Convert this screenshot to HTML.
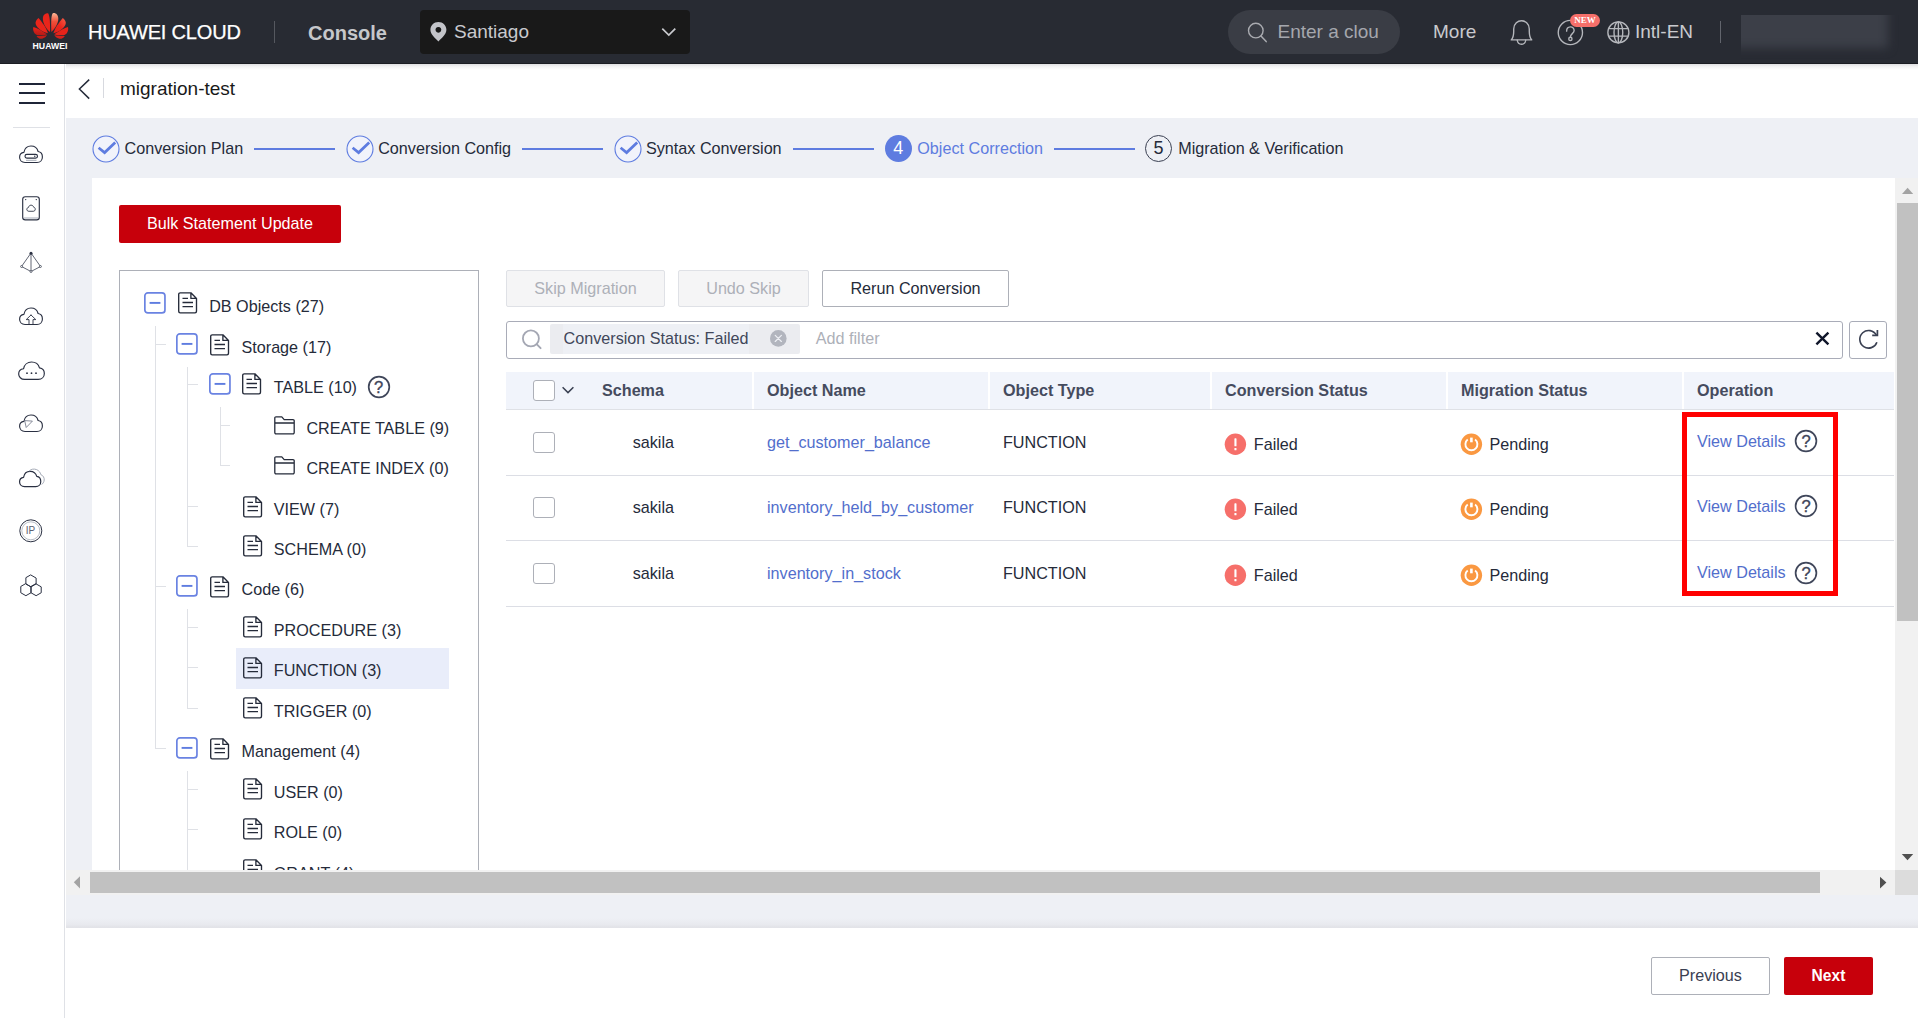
<!DOCTYPE html>
<html>
<head>
<meta charset="utf-8">
<title>migration-test</title>
<style>
*{box-sizing:border-box;margin:0;padding:0}
html,body{width:1918px;height:1018px;overflow:hidden;background:#fff}
body{font-family:"Liberation Sans",sans-serif;font-size:16.16px;color:#252b3a;position:relative}
.abs{position:absolute}
.t{position:absolute;white-space:nowrap;line-height:20px;height:20px;font-size:16.16px}
.b{font-weight:bold}
svg{position:absolute;overflow:visible}
#top{left:0;top:0;width:1918px;height:64px;background:#282b33;border-bottom:1px solid #1b1d23}
#region{left:420px;top:10px;width:270px;height:44px;background:#191919;border-radius:4px}
#search{left:1228px;top:10px;width:172px;height:44px;background:#3a3d45;border-radius:22px}
#blur{left:1741px;top:15px;width:177px;height:47px;overflow:hidden}
#blur i{position:absolute;left:-14px;top:-14px;width:161px;height:47px;background:#3c3f48;filter:blur(5px)}
#side{left:0;top:64px;width:65px;height:954px;background:#fff;border-right:1px solid #dfe1e6}
#titlebar{left:66px;top:64px;width:1852px;height:54px;background:#fff}
#content{left:66px;top:118px;width:1852px;height:809px;background:#eef0f5}
#panel{left:92px;top:178px;width:1803px;height:692px;background:#fff;overflow:hidden}
#clip{left:0;top:0;width:1895px;height:870px;overflow:hidden}
#footer{left:66px;top:927.7px;width:1852px;height:91px;background:#fff}
.btn{position:absolute;height:37px;border-radius:2px;text-align:center;line-height:35px;font-size:16.16px;white-space:nowrap}
.btn.red{background:#c7000b;color:#fff;line-height:37px}
.btn.out{border:1px solid #adb0b8;background:#fff;color:#252b3a}
.btn.dis{border:1px solid #dfe1e6;background:#f5f5f6;color:#adb0b8}
.tg{position:absolute;width:22px;height:22px;border:1.5px solid #6e86e3;border-radius:3.5px;background:#fff}
.tg:after{content:"";position:absolute;left:4.4px;top:8.8px;width:10.4px;height:1.5px;background:#5e7ce0}
.vl{position:absolute;width:1px;background:#dfe1e6}
.hl{position:absolute;height:1px;background:#dfe1e6}
.cb{position:absolute;width:22px;height:21px;border:1px solid #adb0b8;border-radius:3px;background:#fff}
.lnk{color:#526ecc}
</style>
</head>
<body>
<div id="content" class="abs"></div>
<div id="titlebar" class="abs"></div>
<div class="abs" style="left:66px;top:64px;width:1852px;height:6px;background:linear-gradient(#dfdfe1,#f3f3f4 45%,#fff)"></div>
<svg style="left:76px;top:77px" width="16" height="24" viewBox="0 0 16 24"><polyline points="13.2,2.6 3.4,12 13.2,21.6" fill="none" stroke="#252b3a" stroke-width="1.5"/></svg>
<div class="abs" style="left:103px;top:78px;width:1px;height:20px;background:#d7d9df"></div>
<div class="t " style="left:120px;top:79px;font-size:19px;color:#191919;">migration-test</div>
<svg style="left:91.9px;top:134.8px" width="28" height="28" viewBox="0 0 28 28"><circle cx="14" cy="14" r="13" fill="#f1f3fb" stroke="#5e7ce0" stroke-width="1.1"/><polyline points="6.6,12.8 12.6,17.6 23.2,7.6" fill="none" stroke="#5e7ce0" stroke-width="2.7" stroke-linejoin="miter"/></svg>
<div class="t " style="left:124.6px;top:138px;font-size:16.16px;color:#252b3a;">Conversion Plan</div>
<div class="abs" style="left:254px;top:147.6px;width:80.5px;height:2px;background:#5e7ce0"></div>
<svg style="left:345.6px;top:134.8px" width="28" height="28" viewBox="0 0 28 28"><circle cx="14" cy="14" r="13" fill="#f1f3fb" stroke="#5e7ce0" stroke-width="1.1"/><polyline points="6.6,12.8 12.6,17.6 23.2,7.6" fill="none" stroke="#5e7ce0" stroke-width="2.7" stroke-linejoin="miter"/></svg>
<div class="t " style="left:378.2px;top:138px;font-size:16.16px;color:#252b3a;">Conversion Config</div>
<div class="abs" style="left:522px;top:147.6px;width:80.5px;height:2px;background:#5e7ce0"></div>
<svg style="left:613.5px;top:134.8px" width="28" height="28" viewBox="0 0 28 28"><circle cx="14" cy="14" r="13" fill="#f1f3fb" stroke="#5e7ce0" stroke-width="1.1"/><polyline points="6.6,12.8 12.6,17.6 23.2,7.6" fill="none" stroke="#5e7ce0" stroke-width="2.7" stroke-linejoin="miter"/></svg>
<div class="t " style="left:646px;top:138px;font-size:16.16px;color:#252b3a;">Syntax Conversion</div>
<div class="abs" style="left:793.3px;top:147.6px;width:80.5px;height:2px;background:#5e7ce0"></div>
<div class="abs" style="left:885px;top:135.3px;width:27px;height:27px;border-radius:50%;background:#5e7ce0"></div>
<div class="t " style="left:893.3px;top:138px;font-size:18px;color:#fff;">4</div>
<div class="t " style="left:917.3px;top:138px;font-size:16.16px;color:#5e7ce0;">Object Correction</div>
<div class="abs" style="left:1054px;top:147.6px;width:81px;height:2px;background:#5e7ce0"></div>
<div class="abs" style="left:1145px;top:135.3px;width:27px;height:27px;border-radius:50%;border:1px solid #3a4052"></div>
<div class="t " style="left:1153.4px;top:138px;font-size:18px;color:#252b3a;">5</div>
<div class="t " style="left:1178.2px;top:138px;font-size:16.16px;color:#252b3a;">Migration &amp; Verification</div>
<div id="panel" class="abs"></div>
<div class="btn red" style="left:119px;top:205px;width:222px;height:38px;line-height:37px">Bulk Statement Update</div>
<div id="clip" class="abs">
<div class="abs" style="left:119px;top:270px;width:360px;height:620px;border:1px solid #adb0b8;background:#fff"></div>
<div class="abs" style="left:236px;top:648.0px;width:213px;height:40.5px;background:#e9edfa"></div>
<div class="vl" style="left:155px;top:325.5px;height:423.3px"></div>
<div class="hl" style="left:155px;top:344.2px;width:10.5px"></div>
<div class="hl" style="left:155px;top:586.4px;width:10.5px"></div>
<div class="hl" style="left:155px;top:748.3px;width:10.5px"></div>
<div class="vl" style="left:187.3px;top:366.7px;height:179.7px"></div>
<div class="hl" style="left:187.3px;top:384.0px;width:10.5px"></div>
<div class="hl" style="left:187.3px;top:506.3px;width:10.5px"></div>
<div class="hl" style="left:187.3px;top:545.9px;width:10.5px"></div>
<div class="vl" style="left:219.6px;top:406.5px;height:59.0px"></div>
<div class="hl" style="left:219.6px;top:425.4px;width:10.5px"></div>
<div class="hl" style="left:219.6px;top:464.9px;width:10.5px"></div>
<div class="vl" style="left:187.3px;top:608.9px;height:99.4px"></div>
<div class="hl" style="left:187.3px;top:626.8px;width:10.5px"></div>
<div class="hl" style="left:187.3px;top:667.3px;width:10.5px"></div>
<div class="hl" style="left:187.3px;top:707.8px;width:10.5px"></div>
<div class="vl" style="left:187.3px;top:770.8px;height:139.4px"></div>
<div class="hl" style="left:187.3px;top:788.8px;width:10.5px"></div>
<div class="hl" style="left:187.3px;top:829.2px;width:10.5px"></div>
<div class="hl" style="left:187.3px;top:869.7px;width:10.5px"></div>
<svg style="left:144.0px;top:292.10px" width="22" height="22" viewBox="0 0 22 22"><rect x="0.85" y="0.85" width="20.1" height="20.1" rx="3" fill="#fff" stroke="#6a83e2" stroke-width="1.7"/><rect x="5.6" y="9.95" width="10.8" height="1.9" fill="#5e7ce0"/></svg>
<svg style="left:177.6px;top:292.40px" width="20" height="22" viewBox="0 0 20 22"><path fill="none" stroke="#252b3a" stroke-width="1.35" stroke-linejoin="round" d="M2.2,0.8 H12.9 L18.5,6.4 V19.3 a1.5,1.5 0 0 1 -1.5,1.5 H2.2 a1.5,1.5 0 0 1 -1.5,-1.5 V2.3 a1.5,1.5 0 0 1 1.5,-1.5 Z M12.9,0.8 V6.4 H18.5"/><path fill="none" stroke="#252b3a" stroke-width="1.4" d="M4.5,6.4 H10 M4.5,10.5 H15 M4.5,14.6 H15"/></svg>
<div class="t " style="left:209.2px;top:296px;font-size:16.16px;color:#252b3a;">DB Objects (27)</div>
<svg style="left:176.3px;top:333.28px" width="22" height="22" viewBox="0 0 22 22"><rect x="0.85" y="0.85" width="20.1" height="20.1" rx="3" fill="#fff" stroke="#6a83e2" stroke-width="1.7"/><rect x="5.6" y="9.95" width="10.8" height="1.9" fill="#5e7ce0"/></svg>
<svg style="left:209.9px;top:333.58px" width="20" height="22" viewBox="0 0 20 22"><path fill="none" stroke="#252b3a" stroke-width="1.35" stroke-linejoin="round" d="M2.2,0.8 H12.9 L18.5,6.4 V19.3 a1.5,1.5 0 0 1 -1.5,1.5 H2.2 a1.5,1.5 0 0 1 -1.5,-1.5 V2.3 a1.5,1.5 0 0 1 1.5,-1.5 Z M12.9,0.8 V6.4 H18.5"/><path fill="none" stroke="#252b3a" stroke-width="1.4" d="M4.5,6.4 H10 M4.5,10.5 H15 M4.5,14.6 H15"/></svg>
<div class="t " style="left:241.5px;top:337px;font-size:16.16px;color:#252b3a;">Storage (17)</div>
<svg style="left:208.6px;top:373.06px" width="22" height="22" viewBox="0 0 22 22"><rect x="0.85" y="0.85" width="20.1" height="20.1" rx="3" fill="#fff" stroke="#6a83e2" stroke-width="1.7"/><rect x="5.6" y="9.95" width="10.8" height="1.9" fill="#5e7ce0"/></svg>
<svg style="left:242.2px;top:373.36px" width="20" height="22" viewBox="0 0 20 22"><path fill="none" stroke="#252b3a" stroke-width="1.35" stroke-linejoin="round" d="M2.2,0.8 H12.9 L18.5,6.4 V19.3 a1.5,1.5 0 0 1 -1.5,1.5 H2.2 a1.5,1.5 0 0 1 -1.5,-1.5 V2.3 a1.5,1.5 0 0 1 1.5,-1.5 Z M12.9,0.8 V6.4 H18.5"/><path fill="none" stroke="#252b3a" stroke-width="1.4" d="M4.5,6.4 H10 M4.5,10.5 H15 M4.5,14.6 H15"/></svg>
<div class="t " style="left:273.8px;top:377px;font-size:16.16px;color:#252b3a;">TABLE (10)</div>
<svg style="left:273.9px;top:416.44px" width="22" height="19" viewBox="0 0 22 19"><path fill="none" stroke="#252b3a" stroke-width="1.3" stroke-linejoin="round" d="M0.8,16.6 V2 a1.2,1.2 0 0 1 1.2,-1.2 H7.8 L10.2,3.6 H19 a1.2,1.2 0 0 1 1.2,1.2 V16.6 a1.2,1.2 0 0 1 -1.2,1.2 H2 a1.2,1.2 0 0 1 -1.2,-1.2 Z M0.8,7 H20.2"/></svg>
<div class="t " style="left:306.4px;top:418px;font-size:16.16px;color:#252b3a;">CREATE TABLE (9)</div>
<svg style="left:273.9px;top:455.92px" width="22" height="19" viewBox="0 0 22 19"><path fill="none" stroke="#252b3a" stroke-width="1.3" stroke-linejoin="round" d="M0.8,16.6 V2 a1.2,1.2 0 0 1 1.2,-1.2 H7.8 L10.2,3.6 H19 a1.2,1.2 0 0 1 1.2,1.2 V16.6 a1.2,1.2 0 0 1 -1.2,1.2 H2 a1.2,1.2 0 0 1 -1.2,-1.2 Z M0.8,7 H20.2"/></svg>
<div class="t " style="left:306.4px;top:458px;font-size:16.16px;color:#252b3a;">CREATE INDEX (0)</div>
<svg style="left:242.8px;top:495.50px" width="20" height="22" viewBox="0 0 20 22"><path fill="none" stroke="#252b3a" stroke-width="1.35" stroke-linejoin="round" d="M2.2,0.8 H12.9 L18.5,6.4 V19.3 a1.5,1.5 0 0 1 -1.5,1.5 H2.2 a1.5,1.5 0 0 1 -1.5,-1.5 V2.3 a1.5,1.5 0 0 1 1.5,-1.5 Z M12.9,0.8 V6.4 H18.5"/><path fill="none" stroke="#252b3a" stroke-width="1.4" d="M4.5,6.4 H10 M4.5,10.5 H15 M4.5,14.6 H15"/></svg>
<div class="t " style="left:273.8px;top:499px;font-size:16.16px;color:#252b3a;">VIEW (7)</div>
<svg style="left:242.8px;top:535.08px" width="20" height="22" viewBox="0 0 20 22"><path fill="none" stroke="#252b3a" stroke-width="1.35" stroke-linejoin="round" d="M2.2,0.8 H12.9 L18.5,6.4 V19.3 a1.5,1.5 0 0 1 -1.5,1.5 H2.2 a1.5,1.5 0 0 1 -1.5,-1.5 V2.3 a1.5,1.5 0 0 1 1.5,-1.5 Z M12.9,0.8 V6.4 H18.5"/><path fill="none" stroke="#252b3a" stroke-width="1.4" d="M4.5,6.4 H10 M4.5,10.5 H15 M4.5,14.6 H15"/></svg>
<div class="t " style="left:273.8px;top:539px;font-size:16.16px;color:#252b3a;">SCHEMA (0)</div>
<svg style="left:176.3px;top:575.46px" width="22" height="22" viewBox="0 0 22 22"><rect x="0.85" y="0.85" width="20.1" height="20.1" rx="3" fill="#fff" stroke="#6a83e2" stroke-width="1.7"/><rect x="5.6" y="9.95" width="10.8" height="1.9" fill="#5e7ce0"/></svg>
<svg style="left:209.9px;top:575.76px" width="20" height="22" viewBox="0 0 20 22"><path fill="none" stroke="#252b3a" stroke-width="1.35" stroke-linejoin="round" d="M2.2,0.8 H12.9 L18.5,6.4 V19.3 a1.5,1.5 0 0 1 -1.5,1.5 H2.2 a1.5,1.5 0 0 1 -1.5,-1.5 V2.3 a1.5,1.5 0 0 1 1.5,-1.5 Z M12.9,0.8 V6.4 H18.5"/><path fill="none" stroke="#252b3a" stroke-width="1.4" d="M4.5,6.4 H10 M4.5,10.5 H15 M4.5,14.6 H15"/></svg>
<div class="t " style="left:241.5px;top:579px;font-size:16.16px;color:#252b3a;">Code (6)</div>
<svg style="left:242.8px;top:616.04px" width="20" height="22" viewBox="0 0 20 22"><path fill="none" stroke="#252b3a" stroke-width="1.35" stroke-linejoin="round" d="M2.2,0.8 H12.9 L18.5,6.4 V19.3 a1.5,1.5 0 0 1 -1.5,1.5 H2.2 a1.5,1.5 0 0 1 -1.5,-1.5 V2.3 a1.5,1.5 0 0 1 1.5,-1.5 Z M12.9,0.8 V6.4 H18.5"/><path fill="none" stroke="#252b3a" stroke-width="1.4" d="M4.5,6.4 H10 M4.5,10.5 H15 M4.5,14.6 H15"/></svg>
<div class="t " style="left:273.8px;top:620px;font-size:16.16px;color:#252b3a;">PROCEDURE (3)</div>
<svg style="left:242.8px;top:656.52px" width="20" height="22" viewBox="0 0 20 22"><path fill="none" stroke="#252b3a" stroke-width="1.35" stroke-linejoin="round" d="M2.2,0.8 H12.9 L18.5,6.4 V19.3 a1.5,1.5 0 0 1 -1.5,1.5 H2.2 a1.5,1.5 0 0 1 -1.5,-1.5 V2.3 a1.5,1.5 0 0 1 1.5,-1.5 Z M12.9,0.8 V6.4 H18.5"/><path fill="none" stroke="#252b3a" stroke-width="1.4" d="M4.5,6.4 H10 M4.5,10.5 H15 M4.5,14.6 H15"/></svg>
<div class="t " style="left:273.8px;top:660px;font-size:16.16px;color:#252b3a;">FUNCTION (3)</div>
<svg style="left:242.8px;top:697.00px" width="20" height="22" viewBox="0 0 20 22"><path fill="none" stroke="#252b3a" stroke-width="1.35" stroke-linejoin="round" d="M2.2,0.8 H12.9 L18.5,6.4 V19.3 a1.5,1.5 0 0 1 -1.5,1.5 H2.2 a1.5,1.5 0 0 1 -1.5,-1.5 V2.3 a1.5,1.5 0 0 1 1.5,-1.5 Z M12.9,0.8 V6.4 H18.5"/><path fill="none" stroke="#252b3a" stroke-width="1.4" d="M4.5,6.4 H10 M4.5,10.5 H15 M4.5,14.6 H15"/></svg>
<div class="t " style="left:273.8px;top:701px;font-size:16.16px;color:#252b3a;">TRIGGER (0)</div>
<svg style="left:176.3px;top:737.38px" width="22" height="22" viewBox="0 0 22 22"><rect x="0.85" y="0.85" width="20.1" height="20.1" rx="3" fill="#fff" stroke="#6a83e2" stroke-width="1.7"/><rect x="5.6" y="9.95" width="10.8" height="1.9" fill="#5e7ce0"/></svg>
<svg style="left:209.9px;top:737.68px" width="20" height="22" viewBox="0 0 20 22"><path fill="none" stroke="#252b3a" stroke-width="1.35" stroke-linejoin="round" d="M2.2,0.8 H12.9 L18.5,6.4 V19.3 a1.5,1.5 0 0 1 -1.5,1.5 H2.2 a1.5,1.5 0 0 1 -1.5,-1.5 V2.3 a1.5,1.5 0 0 1 1.5,-1.5 Z M12.9,0.8 V6.4 H18.5"/><path fill="none" stroke="#252b3a" stroke-width="1.4" d="M4.5,6.4 H10 M4.5,10.5 H15 M4.5,14.6 H15"/></svg>
<div class="t " style="left:241.5px;top:741px;font-size:16.16px;color:#252b3a;">Management (4)</div>
<svg style="left:242.8px;top:777.96px" width="20" height="22" viewBox="0 0 20 22"><path fill="none" stroke="#252b3a" stroke-width="1.35" stroke-linejoin="round" d="M2.2,0.8 H12.9 L18.5,6.4 V19.3 a1.5,1.5 0 0 1 -1.5,1.5 H2.2 a1.5,1.5 0 0 1 -1.5,-1.5 V2.3 a1.5,1.5 0 0 1 1.5,-1.5 Z M12.9,0.8 V6.4 H18.5"/><path fill="none" stroke="#252b3a" stroke-width="1.4" d="M4.5,6.4 H10 M4.5,10.5 H15 M4.5,14.6 H15"/></svg>
<div class="t " style="left:273.8px;top:782px;font-size:16.16px;color:#252b3a;">USER (0)</div>
<svg style="left:242.8px;top:818.44px" width="20" height="22" viewBox="0 0 20 22"><path fill="none" stroke="#252b3a" stroke-width="1.35" stroke-linejoin="round" d="M2.2,0.8 H12.9 L18.5,6.4 V19.3 a1.5,1.5 0 0 1 -1.5,1.5 H2.2 a1.5,1.5 0 0 1 -1.5,-1.5 V2.3 a1.5,1.5 0 0 1 1.5,-1.5 Z M12.9,0.8 V6.4 H18.5"/><path fill="none" stroke="#252b3a" stroke-width="1.4" d="M4.5,6.4 H10 M4.5,10.5 H15 M4.5,14.6 H15"/></svg>
<div class="t " style="left:273.8px;top:822px;font-size:16.16px;color:#252b3a;">ROLE (0)</div>
<svg style="left:242.8px;top:858.92px" width="20" height="22" viewBox="0 0 20 22"><path fill="none" stroke="#252b3a" stroke-width="1.35" stroke-linejoin="round" d="M2.2,0.8 H12.9 L18.5,6.4 V19.3 a1.5,1.5 0 0 1 -1.5,1.5 H2.2 a1.5,1.5 0 0 1 -1.5,-1.5 V2.3 a1.5,1.5 0 0 1 1.5,-1.5 Z M12.9,0.8 V6.4 H18.5"/><path fill="none" stroke="#252b3a" stroke-width="1.4" d="M4.5,6.4 H10 M4.5,10.5 H15 M4.5,14.6 H15"/></svg>
<div class="t " style="left:273.8px;top:863px;font-size:16.16px;color:#252b3a;">GRANT (4)</div>
<svg style="left:366.8px;top:374.56px" width="24" height="24" viewBox="0 0 24 24"><circle cx="12" cy="12" r="10.3" fill="none" stroke="#3f465a" stroke-width="1.7"/></svg>
<div class="t" style="left:374.1px;top:377.56px;font-size:16.6px;color:#3f465a;-webkit-text-stroke:.35px #3f465a">?</div>
</div>
<div class="btn dis" style="left:506px;top:270px;width:159px">Skip Migration</div>
<div class="btn dis" style="left:678px;top:270px;width:131px">Undo Skip</div>
<div class="btn out" style="left:822px;top:270px;width:187px">Rerun Conversion</div>
<div class="abs" style="left:506px;top:321px;width:1337px;height:38px;border:1px solid #a9acb8;border-radius:3px;background:#fff"></div>
<svg style="left:519px;top:327px" width="26" height="26" viewBox="0 0 26 26"><circle cx="11.9" cy="11.4" r="8" fill="none" stroke="#a4a7b3" stroke-width="1.8"/><line x1="17.6" y1="17.2" x2="21.6" y2="21.2" stroke="#a4a7b3" stroke-width="1.9" stroke-linecap="round"/></svg>
<div class="abs" style="left:550px;top:324px;width:250px;height:30px;background:#ebecf0;border-radius:2px"></div>
<div class="abs" style="left:563px;top:324px;width:186px;height:30px;background:#eef0f5"></div>
<div class="t " style="left:563.6px;top:328px;font-size:16.16px;color:#41475a;">Conversion Status: Failed</div>
<svg style="left:769px;top:329px" width="19" height="19" viewBox="0 0 19 19"><circle cx="9.3" cy="9.4" r="8.3" fill="#b2b5be"/><path d="M6.2,6.3 L12.4,12.5 M12.4,6.3 L6.2,12.5" stroke="#eef0f5" stroke-width="1.15" stroke-linecap="round"/></svg>
<div class="t " style="left:815.8px;top:328px;font-size:16.16px;color:#adb0b8;">Add filter</div>
<svg style="left:1813px;top:329px" width="20" height="20" viewBox="0 0 20 20"><path d="M3.4,3.6 L15.4,15.4 M15.4,3.6 L3.4,15.4" stroke="#10162a" stroke-width="2.4"/></svg>
<div class="abs" style="left:1849px;top:321px;width:38px;height:38px;border:1px solid #a9acb8;border-radius:3px;background:#fff"></div>
<svg style="left:1856px;top:327px" width="26" height="26" viewBox="0 0 26 26"><path fill="none" stroke="#3a4052" stroke-width="1.6" d="M20.4,8.2 A8.8,8.8 0 1 0 20.9,15.2"/><path fill="none" stroke="#3a4052" stroke-width="1.7" d="M21.4,3.1 L21.4,8.3 L16.2,8.3"/></svg>
<div class="abs" style="left:506px;top:372px;width:1388px;height:38px;background:#f1f4fb;border-bottom:1px solid #dfe1e6"></div>
<div class="abs" style="left:751.5px;top:372px;width:2.5px;height:37px;background:#fff"></div>
<div class="abs" style="left:987.5px;top:372px;width:2.5px;height:37px;background:#fff"></div>
<div class="abs" style="left:1209.5px;top:372px;width:2.5px;height:37px;background:#fff"></div>
<div class="abs" style="left:1445.5px;top:372px;width:2.5px;height:37px;background:#fff"></div>
<div class="abs" style="left:1681.5px;top:372px;width:2.5px;height:37px;background:#fff"></div>
<div class="cb" style="left:533px;top:380px"></div>
<svg style="left:560px;top:383px" width="16" height="14" viewBox="0 0 16 14"><polyline points="2.6,4.2 8,9.6 13.4,4.2" fill="none" stroke="#3a4052" stroke-width="1.5"/></svg>
<div class="t " style="left:602px;top:380px;font-size:16.16px;color:#454b5e;font-weight:bold;">Schema</div>
<div class="t " style="left:767px;top:380px;font-size:16.16px;color:#454b5e;font-weight:bold;">Object Name</div>
<div class="t " style="left:1003px;top:380px;font-size:16.16px;color:#454b5e;font-weight:bold;">Object Type</div>
<div class="t " style="left:1225px;top:380px;font-size:16.16px;color:#454b5e;font-weight:bold;">Conversion Status</div>
<div class="t " style="left:1461px;top:380px;font-size:16.16px;color:#454b5e;font-weight:bold;">Migration Status</div>
<div class="t " style="left:1697px;top:380px;font-size:16.16px;color:#454b5e;font-weight:bold;">Operation</div>
<div class="abs" style="left:506px;top:475.0px;width:1388px;height:1px;background:#dcdee5"></div>
<div class="cb" style="left:533px;top:432.1px"></div>
<div class="t " style="left:632.7px;top:432px;font-size:16.16px;color:#252b3a;">sakila</div>
<div class="t " style="left:767px;top:432px;font-size:16.16px;color:#526ecc;">get_customer_balance</div>
<div class="t " style="left:1003px;top:432px;font-size:16.16px;color:#252b3a;">FUNCTION</div>
<svg style="left:1224px;top:432.8px" width="23" height="23" viewBox="0 0 23 23"><circle cx="11.4" cy="11.3" r="10.7" fill="#f66f6a"/><rect x="10.4" y="5.3" width="2.1" height="8" rx=".6" fill="#fff"/><rect x="10.4" y="15" width="2.1" height="2.3" rx=".6" fill="#fff"/></svg>
<div class="t " style="left:1253.8px;top:434px;font-size:16.16px;color:#252b3a;">Failed</div>
<svg style="left:1460.4px;top:432.5px" width="23" height="23" viewBox="0 0 23 23"><circle cx="11.4" cy="11.3" r="10.7" fill="#fa9841"/><path d="M7.71,6.57 A6,6 0 1 0 15.09,6.57" fill="none" stroke="#fff" stroke-width="1.9" stroke-linecap="butt"/><rect x="10.1" y="4.6" width="2.6" height="4.7" fill="#fff"/></svg>
<div class="t " style="left:1489.5px;top:434px;font-size:16.16px;color:#252b3a;">Pending</div>
<div class="t " style="left:1697px;top:431px;font-size:16.16px;color:#526ecc;">View Details</div>
<svg style="left:1794.3px;top:429.3px" width="24" height="24" viewBox="0 0 24 24"><circle cx="12" cy="12" r="10.4" fill="none" stroke="#3f465a" stroke-width="1.7"/></svg>
<div class="t" style="left:1801.6px;top:432.30px;font-size:16.6px;color:#3f465a;-webkit-text-stroke:.35px #3f465a">?</div>
<div class="abs" style="left:506px;top:540.0px;width:1388px;height:1px;background:#dcdee5"></div>
<div class="cb" style="left:533px;top:497.2px"></div>
<div class="t " style="left:632.7px;top:497px;font-size:16.16px;color:#252b3a;">sakila</div>
<div class="t " style="left:767px;top:497px;font-size:16.16px;color:#526ecc;">inventory_held_by_customer</div>
<div class="t " style="left:1003px;top:497px;font-size:16.16px;color:#252b3a;">FUNCTION</div>
<svg style="left:1224px;top:497.9px" width="23" height="23" viewBox="0 0 23 23"><circle cx="11.4" cy="11.3" r="10.7" fill="#f66f6a"/><rect x="10.4" y="5.3" width="2.1" height="8" rx=".6" fill="#fff"/><rect x="10.4" y="15" width="2.1" height="2.3" rx=".6" fill="#fff"/></svg>
<div class="t " style="left:1253.8px;top:499px;font-size:16.16px;color:#252b3a;">Failed</div>
<svg style="left:1460.4px;top:497.6px" width="23" height="23" viewBox="0 0 23 23"><circle cx="11.4" cy="11.3" r="10.7" fill="#fa9841"/><path d="M7.71,6.57 A6,6 0 1 0 15.09,6.57" fill="none" stroke="#fff" stroke-width="1.9" stroke-linecap="butt"/><rect x="10.1" y="4.6" width="2.6" height="4.7" fill="#fff"/></svg>
<div class="t " style="left:1489.5px;top:499px;font-size:16.16px;color:#252b3a;">Pending</div>
<div class="t " style="left:1697px;top:496px;font-size:16.16px;color:#526ecc;">View Details</div>
<svg style="left:1794.3px;top:494.4px" width="24" height="24" viewBox="0 0 24 24"><circle cx="12" cy="12" r="10.4" fill="none" stroke="#3f465a" stroke-width="1.7"/></svg>
<div class="t" style="left:1801.6px;top:497.40px;font-size:16.6px;color:#3f465a;-webkit-text-stroke:.35px #3f465a">?</div>
<div class="abs" style="left:506px;top:606.0px;width:1388px;height:1px;background:#dcdee5"></div>
<div class="cb" style="left:533px;top:563.4px"></div>
<div class="t " style="left:632.7px;top:563px;font-size:16.16px;color:#252b3a;">sakila</div>
<div class="t " style="left:767px;top:563px;font-size:16.16px;color:#526ecc;">inventory_in_stock</div>
<div class="t " style="left:1003px;top:563px;font-size:16.16px;color:#252b3a;">FUNCTION</div>
<svg style="left:1224px;top:564.1px" width="23" height="23" viewBox="0 0 23 23"><circle cx="11.4" cy="11.3" r="10.7" fill="#f66f6a"/><rect x="10.4" y="5.3" width="2.1" height="8" rx=".6" fill="#fff"/><rect x="10.4" y="15" width="2.1" height="2.3" rx=".6" fill="#fff"/></svg>
<div class="t " style="left:1253.8px;top:565px;font-size:16.16px;color:#252b3a;">Failed</div>
<svg style="left:1460.4px;top:563.8px" width="23" height="23" viewBox="0 0 23 23"><circle cx="11.4" cy="11.3" r="10.7" fill="#fa9841"/><path d="M7.71,6.57 A6,6 0 1 0 15.09,6.57" fill="none" stroke="#fff" stroke-width="1.9" stroke-linecap="butt"/><rect x="10.1" y="4.6" width="2.6" height="4.7" fill="#fff"/></svg>
<div class="t " style="left:1489.5px;top:565px;font-size:16.16px;color:#252b3a;">Pending</div>
<div class="t " style="left:1697px;top:562px;font-size:16.16px;color:#526ecc;">View Details</div>
<svg style="left:1794.3px;top:560.6px" width="24" height="24" viewBox="0 0 24 24"><circle cx="12" cy="12" r="10.4" fill="none" stroke="#3f465a" stroke-width="1.7"/></svg>
<div class="t" style="left:1801.6px;top:563.60px;font-size:16.6px;color:#3f465a;-webkit-text-stroke:.35px #3f465a">?</div>
<div class="abs" style="left:1682px;top:412px;width:156px;height:184px;border:5px solid #ff0000"></div>
<div class="abs" style="left:1895px;top:178px;width:23px;height:692px;background:#f1f1f1"></div>
<div class="abs" style="left:1897px;top:203px;width:21px;height:418px;background:#c1c1c1"></div>
<svg style="left:1895px;top:178px" width="23" height="23" viewBox="0 0 23 23"><path d="M7,16 L12.6,9.8 L18.2,16Z" fill="#a3a3a3"/></svg>
<svg style="left:1895px;top:847px" width="23" height="23" viewBox="0 0 23 23"><path d="M6.8,7 L18.2,7 L12.5,13.2Z" fill="#505050"/></svg>
<div class="abs" style="left:66px;top:870px;width:1829px;height:24.7px;background:#f1f1f1"></div>
<div class="abs" style="left:90px;top:872px;width:1730px;height:20.8px;background:#c1c1c1"></div>
<svg style="left:66px;top:870px" width="24" height="25" viewBox="0 0 24 25"><path d="M14,6.2 L14,18.4 L7.8,12.3Z" fill="#a3a3a3"/></svg>
<svg style="left:1871px;top:870px" width="24" height="25" viewBox="0 0 24 25"><path d="M9,6.8 L9,18.4 L15.4,12.6Z" fill="#505050"/></svg>
<div class="abs" style="left:1895px;top:870px;width:23px;height:24.7px;background:#dcdcdc"></div>
<div class="abs" style="left:66px;top:918px;width:1852px;height:10px;background:linear-gradient(rgba(227,228,233,0),rgba(226,227,232,.5) 65%,#e0e1e6)"></div>
<div id="footer" class="abs"></div>
<div class="btn out" style="left:1651px;top:957px;width:119px;height:38px;line-height:34px;color:#3a4052">Previous</div>
<div class="btn red" style="left:1784px;top:957px;width:89px;height:38px"></div>
<div class="t " style="left:1811.6px;top:966px;font-size:15.6px;color:#fff;font-weight:bold;">Next</div>
<div id="top" class="abs"></div>
<div id="region" class="abs"></div>
<div id="search" class="abs"></div>
<div id="blur" class="abs"><i></i></div>
<svg style="left:0;top:0" width="140" height="64" viewBox="0 0 140 64">
<defs>
<linearGradient id="lgp" x1="0" y1="0" x2="0" y2="1"><stop offset="0" stop-color="#fbb594"/><stop offset=".45" stop-color="#f0503a"/><stop offset="1" stop-color="#e8231a"/></linearGradient>
<linearGradient id="lgd" x1="0" y1="0" x2="0" y2="1"><stop offset="0" stop-color="#ea251b"/><stop offset="1" stop-color="#b51a15"/></linearGradient>
<linearGradient id="lgr" x1="1" y1="0" x2="0" y2="1"><stop offset="0" stop-color="#f4604a"/><stop offset=".5" stop-color="#ea251b"/><stop offset="1" stop-color="#e2211a"/></linearGradient>
</defs>
<g transform="translate(20,4) scale(0.06258)">
<path fill="#ea251b" d="M480,448 C400,385 345,260 372,190 C392,152 430,138 452,150 C478,200 482,300 480,448Z"/>
<path fill="url(#lgp)" d="M500,448 C498,300 494,200 520,150 C560,132 612,168 612,232 C615,300 560,400 500,448Z"/>
<path fill="#ea251b" d="M447,468 C330,440 248,362 248,300 C254,262 280,236 296,224 C350,290 422,380 447,468Z"/>
<path fill="url(#lgr)" d="M533,468 C650,440 732,362 732,300 C726,262 700,236 684,224 C630,290 558,380 533,468Z"/>
<path fill="url(#lgd)" d="M434,482 C340,420 270,385 214,366 C198,420 228,482 280,500 C340,502 400,497 434,482Z"/>
<path fill="#e6231a" d="M546,482 C640,420 710,385 766,366 C782,420 752,482 700,500 C640,502 580,497 546,482Z"/>
<path fill="#c41d17" d="M432,494 C380,507 320,514 264,511 C280,542 320,562 352,556 C392,541 422,517 432,494Z"/>
<path fill="#d6201a" d="M548,494 C600,507 660,514 716,511 C700,542 660,562 628,556 C588,541 558,517 548,494Z"/>
</g>
</svg>
<div class="t " style="left:32.6px;top:36px;font-size:8.7px;color:#fff;font-weight:bold;">HUAWEI</div>
<div class="t " style="left:88px;top:22px;font-size:20px;color:#fff;letter-spacing:-.18px;-webkit-text-stroke:.25px #fff;">HUAWEI CLOUD</div>
<div class="abs" style="left:274px;top:21px;width:1px;height:22px;background:#55585f"></div>
<div class="t " style="left:308px;top:23px;font-size:20px;color:#c5c7cb;font-weight:bold;">Console</div>
<svg style="left:430px;top:22px" width="17" height="20" viewBox="0 0 17 20"><path fill="#c3c4c9" fill-rule="evenodd" d="M8.4,0 C3.9,0 0.4,3.4 0.4,7.8 C0.4,12.6 5.6,16.6 8.4,19.4 C11.2,16.6 16.4,12.6 16.4,7.8 C16.4,3.4 12.9,0 8.4,0Z M8.4,4.9 a2.9,2.9 0 1 0 0.001,0Z"/></svg>
<div class="t " style="left:454px;top:22px;font-size:19px;color:#c9cace;">Santiago</div>
<svg style="left:660px;top:26px" width="18" height="12" viewBox="0 0 18 12"><polyline points="2.3,2.6 8.8,9 15.3,2.6" fill="none" stroke="#c9cace" stroke-width="1.7"/></svg>
<svg style="left:1246px;top:21px" width="24" height="24" viewBox="0 0 24 24"><circle cx="9.8" cy="9.6" r="7.3" fill="none" stroke="#a9abb0" stroke-width="1.4"/><line x1="15" y1="15" x2="20.2" y2="20.6" stroke="#a9abb0" stroke-width="1.5" stroke-linecap="round"/></svg>
<div class="t " style="left:1277.5px;top:22px;font-size:19px;color:#a5a7ad;">Enter a clou</div>
<div class="t " style="left:1433px;top:22px;font-size:19px;color:#c9cace;">More</div>
<svg style="left:1490px;top:8px" width="240" height="48" viewBox="0 0 1920 384">
<g fill="none" stroke="#b5b7bc" stroke-width="11" stroke-linejoin="round" stroke-linecap="round">
<path d="M170,255 C196,228 188,195 190,166 C192,124 222,102 252,102 C282,102 312,124 314,166 C316,195 308,228 334,255 Z"/>
<path d="M218,258 C224,300 280,300 286,258"/>
<circle cx="643" cy="196" r="97"/>
<path d="M613,185 C613,140 673,140 673,180 C673,205 643,205 643,232"/>
<circle cx="643" cy="247" r="13"/>
<circle cx="1027" cy="195" r="84"/>
<ellipse cx="1027" cy="195" rx="35" ry="84"/>
<line x1="1027" y1="111" x2="1027" y2="279"/>
<line x1="950" y1="165" x2="1104" y2="165"/>
<line x1="950" y1="225" x2="1104" y2="225"/>
</g>
</svg>
<div class="abs" style="left:1570px;top:13.5px;width:30px;height:13.5px;border-radius:7px;background:#f66f6a"></div>
<div class="t" style="left:1574.2px;top:10.3px;font-family:'Liberation Serif',serif;font-weight:bold;font-size:9px;color:#fff;letter-spacing:0">NEW</div>
<div class="t " style="left:1635px;top:22px;font-size:19px;color:#c9cace;">Intl-EN</div>
<div class="abs" style="left:1720px;top:21px;width:1px;height:22px;background:#62656d"></div>
<div id="side" class="abs"></div>
<div class="abs" style="left:19px;top:83px;width:26px;height:2px;background:#1f2538"></div>
<div class="abs" style="left:19px;top:92px;width:26px;height:2px;background:#1f2538"></div>
<div class="abs" style="left:19px;top:101.5px;width:26px;height:2px;background:#1f2538"></div>
<div class="abs" style="left:13px;top:127px;width:37px;height:1px;background:#dfe1e6"></div>
<svg style="left:19px;top:145px" width="24" height="19" viewBox="0 0 24 19"><path fill="none" stroke="#2a3042" stroke-width="1.15" stroke-linejoin="round" stroke-linecap="round" d="M6,17.5 C2.6,17.5 0.6,15 0.6,12.3 C0.6,9.7 2.4,7.7 4.9,7.4 C5.6,3.6 8.5,1 12,1 C15.4,1 18.2,3.1 19.1,6.5 C21.9,6.9 23.4,9.2 23.4,11.9 C23.4,15.1 21.2,17.5 18,17.5 Z"/><rect x="6" y="9.3" width="12.5" height="3.8" rx="1.9" fill="none" stroke="#2a3042" stroke-width="1.15" stroke-linejoin="round" stroke-linecap="round"/><circle cx="15.8" cy="11.2" r=".7" fill="#2a3042"/><line x1="7" y1="15.3" x2="17.5" y2="15.3" stroke="#9aa0ae" stroke-width=".9"/></svg>
<svg style="left:22px;top:196px" width="18" height="25" viewBox="0 0 18 25"><rect x=".7" y=".7" width="16.6" height="23.2" rx="2.6" fill="none" stroke="#2a3042" stroke-width="1.15" stroke-linejoin="round" stroke-linecap="round"/><circle cx="3.7" cy="3.6" r=".7" fill="#2a3042"/><circle cx="14.3" cy="3.6" r=".7" fill="#2a3042"/><path transform="translate(4.6,8.8) scale(.37)" fill="none" stroke="#2a3042" stroke-width="2.4" d="M6,17.5 C2.6,17.5 0.6,15 0.6,12.3 C0.6,9.7 2.4,7.7 4.9,7.4 C5.6,3.6 8.5,1 12,1 C15.4,1 18.2,3.1 19.1,6.5 C21.9,6.9 23.4,9.2 23.4,11.9 C23.4,15.1 21.2,17.5 18,17.5 Z"/><line x1="2" y1="22" x2="16" y2="22" stroke="#9aa0ae" stroke-width=".9"/></svg>
<svg style="left:20px;top:251px" width="22" height="23" viewBox="0 0 22 23"><path fill="none" stroke="#3a4052" stroke-width=".8" stroke-linejoin="round" d="M11,2 L1.5,15.5 L11,20.5 L20.5,15.5 Z M11,2 L11,20.5"/><circle cx="11" cy="2.3" r="1.5" fill="#2a3042"/><circle cx="1.6" cy="15.5" r="1" fill="#fff" stroke="#2a3042" stroke-width=".7"/><circle cx="20.4" cy="15.5" r="1" fill="#fff" stroke="#2a3042" stroke-width=".7"/><circle cx="11" cy="20.5" r="1" fill="#fff" stroke="#2a3042" stroke-width=".7"/></svg>
<svg style="left:19px;top:307px" width="24" height="19" viewBox="0 0 24 19"><path fill="none" stroke="#2a3042" stroke-width="1.15" stroke-linejoin="round" stroke-linecap="round" d="M6,17.5 C2.6,17.5 0.6,15 0.6,12.3 C0.6,9.7 2.4,7.7 4.9,7.4 C5.6,3.6 8.5,1 12,1 C15.4,1 18.2,3.1 19.1,6.5 C21.9,6.9 23.4,9.2 23.4,11.9 C23.4,15.1 21.2,17.5 18,17.5 Z"/><path fill="none" stroke="#2a3042" stroke-width="0.9" stroke-linejoin="round" stroke-linecap="round" d="M12,8 L7.2,12.6 L10,12.6 L10,17.3 M14,17.3 L14,12.6 L16.8,12.6 L12,8"/></svg>
<svg style="left:18px;top:361px" width="27" height="20" viewBox="0 0 24 19" preserveAspectRatio="none"><path fill="none" stroke="#2a3042" stroke-width="1.05" stroke-linejoin="round" stroke-linecap="round" d="M6,17.5 C2.6,17.5 0.6,15 0.6,12.3 C0.6,9.7 2.4,7.7 4.9,7.4 C5.6,3.6 8.5,1 12,1 C15.4,1 18.2,3.1 19.1,6.5 C21.9,6.9 23.4,9.2 23.4,11.9 C23.4,15.1 21.2,17.5 18,17.5 Z"/><circle cx="8" cy="11.6" r=".8" fill="#2a3042"/><circle cx="12" cy="11.6" r=".8" fill="#2a3042"/><circle cx="16" cy="11.6" r=".8" fill="#2a3042"/></svg>
<svg style="left:19px;top:414px" width="24" height="19" viewBox="0 0 24 19"><path fill="none" stroke="#2a3042" stroke-width="1.15" stroke-linejoin="round" stroke-linecap="round" d="M6,17.5 C2.6,17.5 0.6,15 0.6,12.3 C0.6,9.7 2.4,7.7 4.9,7.4 C5.6,3.6 8.5,1 12,1 C15.4,1 18.2,3.1 19.1,6.5 C21.9,6.9 23.4,9.2 23.4,11.9 C23.4,15.1 21.2,17.5 18,17.5 Z"/><path fill="none" stroke="#6a7082" stroke-width=".8" stroke-linejoin="round" d="M5.7,6.6 L13.4,7.1 L7.2,13.5 Z"/></svg>
<svg style="left:19px;top:468px" width="26" height="20" viewBox="0 0 26 20"><path transform="translate(0,2.4) scale(.93)" fill="none" stroke="#2a3042" stroke-width="1.3" stroke-linejoin="round" stroke-linecap="round" d="M6,17.5 C2.6,17.5 0.6,15 0.6,12.3 C0.6,9.7 2.4,7.7 4.9,7.4 C5.6,3.6 8.5,1 12,1 C15.4,1 18.2,3.1 19.1,6.5 C21.9,6.9 23.4,9.2 23.4,11.9 C23.4,15.1 21.2,17.5 18,17.5 Z"/><path fill="none" stroke="#9aa0ae" stroke-width=".9" d="M10,3.2 C12,1 15,.6 17.6,1.6 C20,2.6 21.4,4.6 21.8,6.6 C24.4,7.6 25.4,10 25.2,12 C25,14.2 23.8,15.8 22.6,16.4"/></svg>
<svg style="left:19px;top:519px" width="24" height="24" viewBox="0 0 24 24"><circle cx="11.8" cy="11.8" r="11" fill="none" stroke="#2a3042" stroke-width="1"/><circle cx="11.8" cy="11.8" r="9" fill="none" stroke="#9aa0ae" stroke-width=".7"/></svg>
<div class="t" style="left:25.8px;top:520.8px;font-size:10px;color:#5a6070;letter-spacing:-.2px">IP</div>
<svg style="left:19px;top:574px" width="24" height="23" viewBox="0 0 24 23"><path fill="none" stroke="#2a3042" stroke-width="1" stroke-linejoin="round" stroke-linecap="round" d="M12.00,1.10 L17.11,4.05 L17.11,9.95 L12.00,12.90 L6.89,9.95 L6.89,4.05Z M6.90,9.90 L12.01,12.85 L12.01,18.75 L6.90,21.70 L1.79,18.75 L1.79,12.85Z M17.10,9.90 L22.21,12.85 L22.21,18.75 L17.10,21.70 L11.99,18.75 L11.99,12.85Z"/></svg>
</body>
</html>
